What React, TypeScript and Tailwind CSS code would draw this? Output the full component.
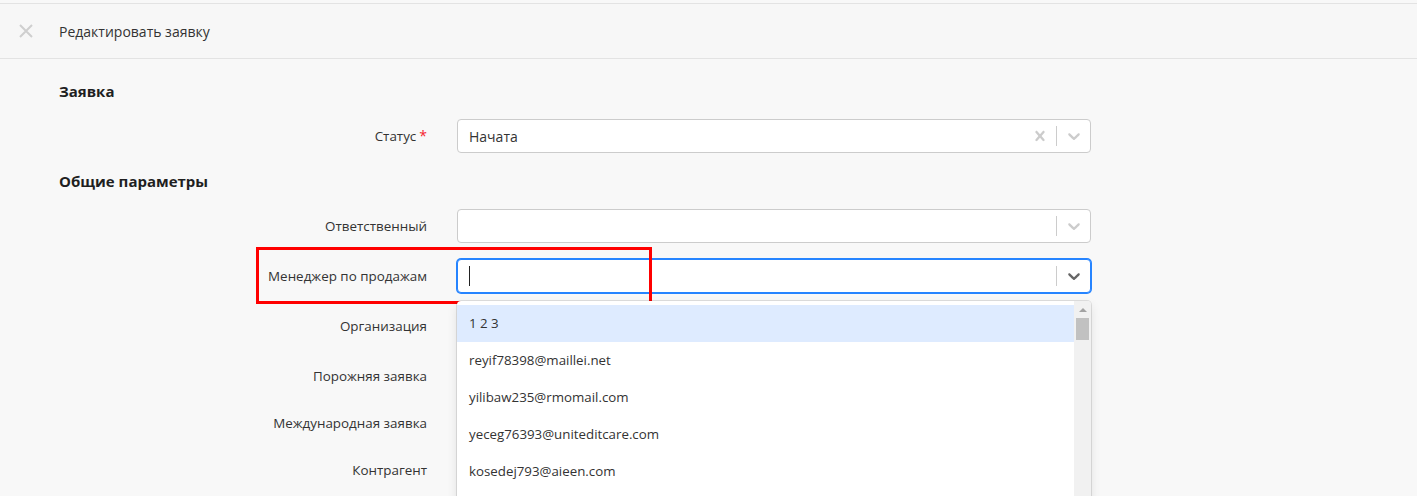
const ChevronDown = ({ className }: { className?: string }) => (
  <svg viewBox="0 0 20 20" className={className} fill="currentColor" aria-hidden="true">
    <path d="M4.516 7.548c0.436-0.446 1.043-0.481 1.576 0l3.908 3.747 3.908-3.747c0.533-0.481 1.141-0.446 1.574 0 0.436 0.445 0.408 1.197 0 1.615-0.406 0.418-4.695 4.502-4.695 4.502-0.217 0.223-0.502 0.335-0.787 0.335s-0.57-0.112-0.789-0.335c0 0-4.287-4.084-4.695-4.502s-0.436-1.17 0-1.615z" />
  </svg>
);

const CrossIcon = ({ className }: { className?: string }) => (
  <svg viewBox="0 0 20 20" className={className} fill="currentColor" aria-hidden="true">
    <path d="M14.348 14.849c-0.469 0.469-1.229 0.469-1.697 0l-2.651-3.030-2.651 3.029c-0.469 0.469-1.229 0.469-1.697 0-0.469-0.469-0.469-1.229 0-1.697l2.758-3.15-2.759-3.152c-0.469-0.469-0.469-1.228 0-1.697s1.228-0.469 1.697 0l2.652 3.031 2.651-3.031c0.469-0.469 1.228-0.469 1.697 0s0.469 1.229 0 1.697l-2.758 3.152 2.758 3.15c0.469 0.469 0.469 1.229 0 1.698z" />
  </svg>
);

type SelectProps = {
  value?: string;
  clearable?: boolean;
  focused?: boolean;
};

const Select = ({ value, clearable, focused }: SelectProps) => (
  <div
    className={
      "flex h-[34px] w-[634px] items-center rounded bg-white " +
      (focused
        ? "border border-[#2684ff] shadow-[0_0_0_1px_#2684ff]"
        : "border border-[#cccccc]")
    }
  >
    <div className="flex flex-1 items-center pl-[11px] text-[14px] text-[#333]">
      {value}
      {focused && <span className="h-[20px] w-px bg-[#222]" />}
    </div>
    {clearable && (
      <div className="flex w-[32px] justify-center text-[#cccccc]">
        <CrossIcon className="h-5 w-5" />
      </div>
    )}
    <span className="h-[20px] w-px bg-[#cccccc]" />
    <div className={"flex w-[33px] justify-center " + (focused ? "text-[#666]" : "text-[#cccccc]")}>
      <ChevronDown className="h-5 w-5" />
    </div>
  </div>
);

const Row = ({
  label,
  required,
  children,
  h = "h-[34px]",
}: {
  label: string;
  required?: boolean;
  children?: React.ReactNode;
  h?: string;
}) => (
  <div className={"flex items-center gap-[30px] " + h}>
    <div className="w-[368px] text-right text-[13.4px] text-[#333]">
      {label}
      {required && <span className="ml-[3px] text-[14px] text-[#f5222d]">*</span>}
    </div>
    {children}
  </div>
);

const options = [
  "1 2 3",
  "reyif78398@maillei.net",
  "yilibaw235@rmomail.com",
  "yeceg76393@uniteditcare.com",
  "kosedej793@aieen.com",
];

export default function App() {
  return (
    <div
      className="relative h-[496px] overflow-hidden bg-[#f8f8f8]"
      style={{ fontFamily: '"Open Sans", "Liberation Sans", sans-serif' }}
    >
      {/* Header */}
      <div className="mt-[3px] flex h-[56px] items-center border-y border-[#e3e3e3] bg-[#f7f7f7]">
        <div className="flex w-[59px] justify-center pr-[7px] text-[#cfcfcf]">
          <svg viewBox="0 0 14 14" className="h-[14px] w-[14px]" stroke="currentColor" strokeWidth={2}>
            <path d="M1 1l12 12M13 1L1 13" />
          </svg>
        </div>
        <span className="text-[14px] text-[#333]">Редактировать заявку</span>
      </div>

      {/* Form */}
      <div className="pl-[59px] pt-[22px]">
        <h2 className="mb-[18px] text-[15px] leading-5 font-bold text-[#1f1f1f]">Заявка</h2>
        <Row label="Статус" required>
          <Select value="Начата" clearable />
        </Row>
        <h2 className="mb-[18px] mt-[18px] text-[15px] leading-5 font-bold text-[#1f1f1f]">Общие параметры</h2>
        <div className="flex flex-col gap-4">
          <Row label="Ответственный">
            <Select />
          </Row>
          <Row label="Менеджер по продажам">
            <div className="relative">
              <Select focused />
              {/* Menu */}
              <div className="absolute left-0 top-[42px] z-10 flex h-[260px] w-[634px] overflow-hidden rounded bg-white shadow-[0_0_0_1px_rgba(0,0,0,0.1),0_4px_11px_rgba(0,0,0,0.1)]">
                <div className="flex-1 pt-[4px]">
                  {options.map((o, i) => (
                    <div
                      key={o}
                      className={
                        "flex h-[37px] items-center px-3 text-[13.3px] text-[#333] " +
                        (i === 0 ? "bg-[#deebff]" : "")
                      }
                    >
                      {o}
                    </div>
                  ))}
                </div>
                <div className="flex w-[17px] flex-col items-center bg-[#f1f1f1]">
                  <div className="mt-[7px] h-0 w-0 border-x-[4px] border-b-[4px] border-x-transparent border-b-[#a3a3a3]" />
                  <div className="mt-[6px] h-[22px] w-[13px] bg-[#c1c1c1]" />
                </div>
              </div>
            </div>
          </Row>
          <Row label="Организация" />
          <Row label="Порожняя заявка" />
          <Row label="Международная заявка" h="h-[28px]" />
          <Row label="Контрагент" />
        </div>
      </div>

      {/* Annotation */}
      <div className="pointer-events-none absolute left-[256px] top-[247px] h-[57px] w-[396px] border-[3px] border-[#ff0000]" />
    </div>
  );
}
